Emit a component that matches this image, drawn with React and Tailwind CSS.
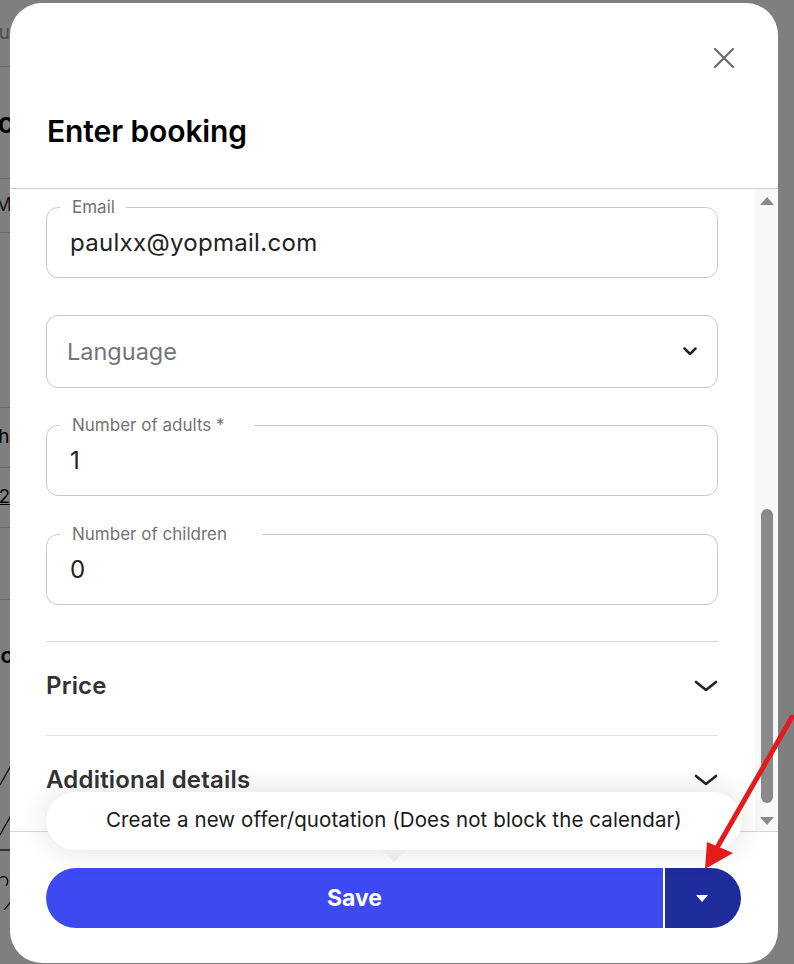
import React from "react";

const font = { fontFamily: "Inter, 'Noto Sans', sans-serif" };

const Chevron = ({ className }) => (
  <svg viewBox="0 0 24 12" className={className} fill="none" stroke="currentColor" strokeWidth="2.6" strokeLinecap="round" strokeLinejoin="round">
    <path d="M2 2l10 8 10-8" />
  </svg>
);

const SmallChevron = () => (
  <svg viewBox="0 0 14 9" className="w-[14px] h-[9px] text-[#222]" fill="none" stroke="currentColor" strokeWidth="2.5" strokeLinecap="round" strokeLinejoin="round">
    <path d="M1.5 1.5L7 7l5.5-5.5" />
  </svg>
);

const OutlinedField = ({ label, labelWidth, value }) => (
  <div className="relative h-[71px] rounded-[12px] border border-[#c9c9c9] flex items-center pl-[23px] pt-[1px]">
    <span
      className={`absolute left-[13px] top-[-12px] h-[22px] bg-white pl-[12px] text-[17px] leading-[22px] text-[#737373] whitespace-nowrap ${labelWidth}`}
    >
      {label}
    </span>
    <span className="text-[24px] tracking-[0.3px] text-[#222]">{value}</span>
  </div>
);

const BackgroundStrip = () => (
  <div className="w-[14px] flex flex-col text-black">
    <div className="h-[67px] border-b border-[#d0d0d0] flex justify-end items-center overflow-hidden">
      <span className="whitespace-nowrap text-[19px] text-[#9a9a9a] pr-[4px]">Ou</span>
    </div>
    <div className="h-[112px] border-b border-[#d0d0d0] flex justify-end items-center overflow-hidden">
      <span className="whitespace-nowrap text-[28px] font-semibold">Enc</span>
    </div>
    <div className="h-[54px] border-b border-[#d0d0d0] flex justify-end items-center overflow-hidden">
      <span className="whitespace-nowrap text-[19px] text-[#333] pr-[2px]">M</span>
    </div>
    <div className="h-[175px] border-b border-[#d0d0d0]"></div>
    <div className="h-[60px] border-b border-[#d0d0d0] flex justify-end items-center overflow-hidden">
      <span className="whitespace-nowrap text-[19px]">Mothl</span>
    </div>
    <div className="h-[60px] border-b border-[#d0d0d0] flex justify-end items-center overflow-hidden">
      <span className="whitespace-nowrap text-[19px] underline pr-[4px]">2</span>
    </div>
    <div className="h-[72px] border-b border-[#d0d0d0]"></div>
    <div className="h-[110px] flex justify-end items-center overflow-hidden">
      <span className="whitespace-nowrap text-[22px] font-semibold">Acco</span>
    </div>
    <svg viewBox="0 0 14 200" className="w-[14px] h-[200px]" fill="none" stroke="#111" strokeWidth="1.3">
      <path d="M0 75L14 50" />
      <path d="M0 125L14 100" />
      <path d="M0 140H14" />
      <path d="M0 168c6-4 10 2 6 8" />
      <path d="M0 205L14 188" />
      <path d="M0 240H14" />
    </svg>
  </div>
);

export default function App() {
  return (
    <div className="relative w-[794px] h-[964px] overflow-hidden bg-white" style={font}>
      <BackgroundStrip />

      {/* dim overlay */}
      <div className="absolute inset-0 bg-black/50"></div>

      {/* dialog */}
      <div className="absolute left-[10px] top-[3px] w-[768px] h-[960px] bg-white rounded-[32px] overflow-hidden flex flex-col">
        <div className="relative h-[186px] border-b border-[#cfcfcf] shrink-0">
          <button className="absolute right-[43px] top-[44px] w-[22px] h-[22px] text-[#6b6b6b]">
            <svg viewBox="0 0 22 22" className="w-[22px] h-[22px]" fill="none" stroke="currentColor" strokeWidth="2.2" strokeLinecap="round">
              <path d="M2 2l18 18M20 2L2 20" />
            </svg>
          </button>
          <h2 className="pt-[109px] pl-[37px] text-[30px] leading-[38px] font-semibold text-black tracking-[-0.1px]">
            Enter booking
          </h2>
        </div>

        <div className="flex h-[642px] shrink-0">
          <div className="flex-1 overflow-hidden pl-[36px] pr-[37px] pt-[18px]">
            <OutlinedField label="Email" labelWidth="w-[66px]" value="paulxx@yopmail.com" />

            <div className="mt-[37px] h-[73px] rounded-[12px] border border-[#c9c9c9] flex items-center justify-between pl-[20px] pr-[20px]">
              <span className="text-[23.5px] text-[#757575]">Language</span>
              <SmallChevron />
            </div>

            <div className="mt-[37px]">
              <OutlinedField label="Number of adults *" labelWidth="w-[194px]" value="1" />
            </div>
            <div className="mt-[38px]">
              <OutlinedField label="Number of children" labelWidth="w-[202px]" value="0" />
            </div>

            <div className="mt-[36px] border-t border-[#d9d9d9]">
              <div className="h-[94px] border-b border-[#e3e3e3] flex items-center justify-between pb-[6px]">
                <span className="text-[24px] tracking-[0.2px] font-semibold text-[#333]">Price</span>
                <Chevron className="w-[24px] h-[12px] text-[#222]" />
              </div>
              <div className="h-[94px] flex items-center justify-between pb-[6px]">
                <span className="text-[24px] tracking-[0.2px] font-semibold text-[#333]">Additional details</span>
                <Chevron className="w-[24px] h-[12px] text-[#222]" />
              </div>
            </div>
          </div>

          {/* scrollbar */}
          <div className="w-[23px] bg-[#f8f8f8] flex flex-col items-center pt-[8px] pb-[6px]">
            <div className="w-0 h-0 border-l-[7px] border-r-[7px] border-b-[8px] border-l-transparent border-r-transparent border-b-[#8a8a8a]"></div>
            <div className="flex-1"></div>
            <div className="w-[12px] h-[294px] rounded-full bg-[#8a8a8a]"></div>
            <div className="h-[14px]"></div>
            <div className="w-0 h-0 border-l-[7px] border-r-[7px] border-t-[8px] border-l-transparent border-r-transparent border-t-[#8a8a8a]"></div>
          </div>
        </div>

        <div className="flex-1 border-t border-[#d6d6d6] px-[36px] pt-[36px]">
          <div className="flex h-[60px]">
            <button className="w-[617px] h-[60px] rounded-l-full bg-[#3d4af2] text-white text-[23px] font-bold">
              Save
            </button>
            <div className="w-[2px] bg-white"></div>
            <button className="w-[76px] h-[60px] rounded-r-full bg-[#1e2c9c] flex items-center justify-center pr-[3px]">
              <span className="w-0 h-0 border-l-[6px] border-r-[6px] border-t-[7px] border-l-transparent border-r-transparent border-t-white"></span>
            </button>
          </div>
        </div>

        {/* tooltip */}
        <div className="absolute left-[36px] top-[789px] w-[696px] flex flex-col items-center">
          <div className="w-full h-[58px] rounded-full bg-white shadow-[0_0_28px_rgba(0,0,0,0.13)] flex items-center justify-center pb-[2px]">
            <span className="text-[20.5px] text-[#1a1a1a] tracking-[0.1px]">
              Create a new offer/quotation (Does not block the calendar)
            </span>
          </div>
          <div className="w-0 h-0 border-l-[13px] border-r-[13px] border-t-[12px] border-l-transparent border-r-transparent border-t-[#ececec]"></div>
        </div>
      </div>

      {/* annotation arrow */}
      <svg className="absolute left-0 top-0 w-[794px] h-[964px] pointer-events-none" viewBox="0 0 794 964">
        <path d="M792 717L718 846" stroke="#e31b1d" strokeWidth="5" strokeLinecap="round" />
        <polygon points="705,869 707,842 733,853" fill="#e31b1d" />
      </svg>
    </div>
  );
}
